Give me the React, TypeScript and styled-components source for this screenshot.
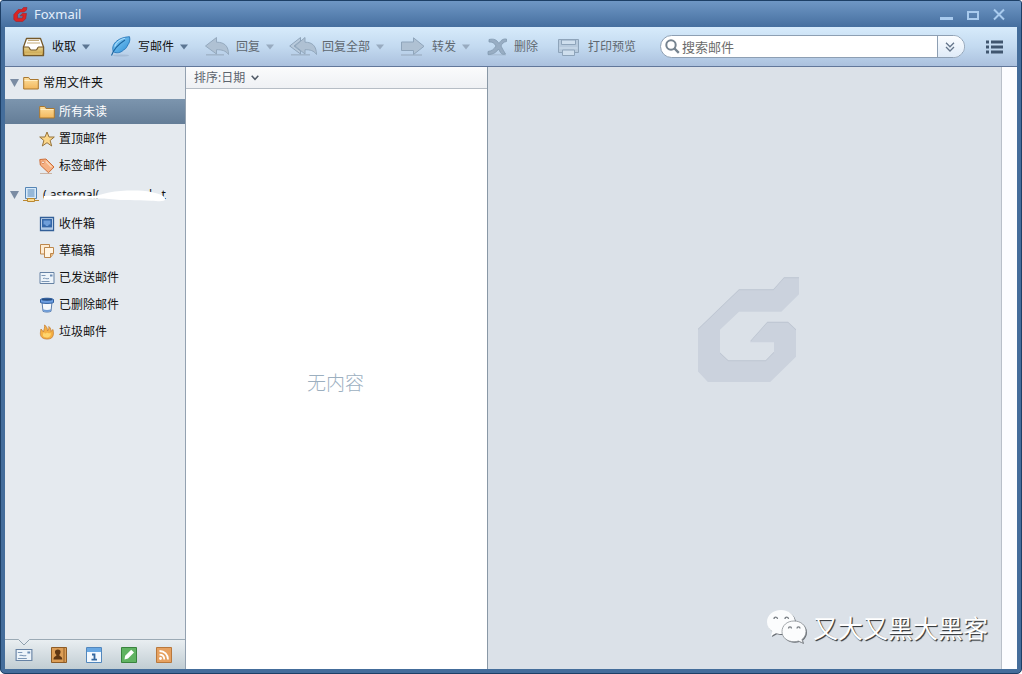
import React from "react";
import styled, { createGlobalStyle } from "styled-components";

const GlobalStyle = createGlobalStyle`
  *, *::before, *::after { box-sizing: border-box; }
  body {
    margin: 0;
    background: #fff;
    font-family: "Noto Sans", "Noto Sans CJK SC", sans-serif;
    font-size: 12px;
    line-height: 18px;
    color: #111;
  }
  button, input { font: inherit; color: inherit; }
  button { border: 0; padding: 0; background: none; cursor: pointer; }
  ul { list-style: none; margin: 0; padding: 0; }
  svg { display: block; flex: none; }
`;

const AppWindow = styled.div`
  display: flex;
  flex-direction: column;
  min-height: 100vh;
  padding: 0 4px 4px;
  border: 1px solid #1d3f66;
  border-radius: 3px 3px 5px 5px;
  background: #446d9b;
  overflow: hidden;
`;

const TitleBar = styled.header`
  display: flex;
  align-items: center;
  gap: 5px;
  height: 26px;
  margin: 0 -4px;
  padding: 0 15px 0 12px;
  background: linear-gradient(#6f97c5, #466f9f);
`;

const Title = styled.h1`
  flex: 1;
  margin: 0;
  font-family: "Noto Sans", sans-serif;
  font-size: 13px;
  font-weight: 400;
  color: #e3eefb;
`;

const WindowControls = styled.div`
  display: flex;
  gap: 12px;
`;

const ControlButton = styled.button`
  display: flex;
  color: #a9cbee;
`;

const Toolbar = styled.div`
  display: flex;
  align-items: center;
  gap: 16px;
  height: 40px;
  padding: 0 14px 0 15px;
  border-bottom: 1px solid #61779a;
  background: linear-gradient(#d7ebfb, #c3daf0 50%, #abc1de);
`;

const ToolButton = styled.button<{ $muted?: boolean }>`
  display: flex;
  align-items: center;
  gap: 6px;
  white-space: nowrap;
  color: ${(p) => (p.$muted ? "#5f6870" : "#111")};
`;

const IconSlot = styled.span<{ $width: number }>`
  display: flex;
  justify-content: center;
  width: ${(p) => p.$width}px;
`;

const SearchBox = styled.form`
  display: flex;
  flex: 1;
  align-items: center;
  height: 23px;
  margin: 0 5px 0 8px;
  padding-left: 4px;
  border: 1px solid #8d9fb3;
  border-radius: 12px;
  background: #fff;
  overflow: hidden;
`;

const SearchInput = styled.input`
  flex: 1;
  min-width: 0;
  height: 21px;
  padding: 0 2px;
  border: 0;
  outline: 0;
  background: transparent;
  font-size: 13px;
  &::placeholder { color: #6c6c6c; opacity: 1; }
`;

const SearchMore = styled.button`
  display: flex;
  align-items: center;
  justify-content: center;
  width: 27px;
  height: 21px;
  padding-right: 3px;
  border-left: 1px solid #8d9fb3;
  background: linear-gradient(#fbfdff, #dfebf8);
`;

const Body = styled.div`
  display: flex;
  flex: 1;
`;

const Sidebar = styled.nav`
  display: flex;
  flex-direction: column;
  flex: none;
  width: 181px;
  border-right: 1px solid #93a1b0;
  background: #e5eaef;
`;

const Tree = styled.div`
  display: flex;
  flex: 1;
  flex-direction: column;
  gap: 1px;
`;

const GroupHead = styled.button`
  display: flex;
  align-items: center;
  gap: 4px;
  width: 100%;
  height: 32px;
  padding: 0 5px;
`;

const FolderList = styled.ul`
  display: flex;
  flex-direction: column;
  gap: 2px;
`;

const FolderLink = styled.a<{ $active?: boolean }>`
  display: flex;
  align-items: center;
  gap: 4px;
  height: 25px;
  padding-left: 34px;
  color: ${(p) => (p.$active ? "#fff" : "#111")};
  background: ${(p) => (p.$active ? "linear-gradient(#7c95ae, #647d97)" : "none")};
  text-decoration: none;
`;

const Account = styled.span`
  position: relative;
  white-space: pre;
`;

const Cover = styled.svg`
  position: absolute;
  left: 0;
  top: 4px;
`;

const ModuleBar = styled.div`
  position: relative;
  display: flex;
  align-items: center;
  gap: 17px;
  height: 30px;
  padding-left: 10px;
  border-top: 1px solid #9baab5;
  background: linear-gradient(#e9eef1, #c1cdd3);
`;

const Notch = styled.svg`
  position: absolute;
  left: 13px;
  top: -1px;
`;

const ModuleButton = styled.button`
  display: flex;
`;

const MessageList = styled.section`
  display: flex;
  flex-direction: column;
  flex: none;
  width: 302px;
  border-right: 1px solid #8998a6;
  background: #fff;
`;

const SortBar = styled.button`
  display: flex;
  align-items: center;
  gap: 6px;
  height: 22px;
  padding: 0 8px;
  border-bottom: 1px solid #b6bdc5;
  background: linear-gradient(#fafbfc, #eff1f4);
  color: #5c646d;
`;

const Empty = styled.p`
  display: flex;
  flex: 1;
  align-items: center;
  justify-content: center;
  margin: 0;
  padding: 8px 2px 0 0;
  font-size: 19px;
  font-weight: 300;
  color: #9cafbf;
`;

const Reader = styled.main`
  position: relative;
  display: flex;
  flex: 1;
  align-items: center;
  justify-content: center;
  padding: 0 0 77px 8px;
  border-right: 1px solid #b9c0c9;
  background: #dbe1e8;
`;

const Gutter = styled.div`
  flex: none;
  width: 15px;
  background: #fcfdff;
`;

const Watermark = styled.div`
  position: absolute;
  right: 13px;
  bottom: 22px;
  display: flex;
  align-items: center;
  gap: 5px;
  font-size: 25px;
  line-height: 38px;
  font-weight: 400;
  color: #fff;
  white-space: nowrap;
  text-shadow: 1px 1px 1px #34383c, 1px 1px 0 #74797e;
`;

const Caret = ({ color = "#65809d" }: { color?: string }) => (
  <svg width="8" height="6" viewBox="0 0 8 6"><path d="M0 .5h8L4 5.5z" fill={color} /></svg>
);

const Twisty = () => (
  <svg width="9" height="8" viewBox="0 0 9 8"><path d="M0 0h9L4.500 8z" fill="#7a8ca3" /></svg>
);

const TrayIcon = () => (
  <svg width="26" height="22" viewBox="0 0 26 22">
    <defs><linearGradient id="tray" x2="0" y2="1"><stop stopColor="#e9d491" /><stop offset="1" stopColor="#c39a3e" /></linearGradient></defs>
    <path d="M6.500 2.500h14l3 8.500v8.500h-20V11z" fill="#fff" stroke="#75592a" strokeWidth="1.300" strokeLinejoin="round" />
    <path d="M8 4.500h11M7 7h13" stroke="#c3ab7a" />
    <path d="M3.500 11h5c1 0 1 3 2.500 3h5c1.500 0 1.500-3 2.500-3h5v7c0 1-.5 1.500-1.500 1.500H5c-1 0-1.500-.5-1.500-1.500z" fill="url(#tray)" stroke="#75592a" strokeWidth="1.200" />
    <path d="M5 18h17" stroke="#eddb9f" opacity=".7" />
  </svg>
);

const QuillIcon = () => (
  <svg width="26" height="22" viewBox="0 0 26 22">
    <defs><linearGradient id="quill" x2="1" y2="1"><stop stopColor="#8fd4fa" /><stop offset="1" stopColor="#2a8bd4" /></linearGradient></defs>
    <ellipse cx="15" cy="19.500" rx="8" ry="1" fill="#93a9c4" opacity=".5" />
    <path d="M7.500 16C4.500 9 11 1.500 23.500.7c.8 3.300 0 6-1.500 8l-1 1.800c-1 2-2 2.800-3.500 3.500C14.500 17 11 17.300 7.500 16z" fill="url(#quill)" stroke="#2576b9" strokeWidth=".9" />
    <path d="M5.500 19.500C7.500 14 12 8.500 19 4" fill="none" stroke="#1a649f" strokeWidth="1.100" />
    <path d="M9 10.500c1-4 5-7 10-8.300" fill="none" stroke="#c5eaff" opacity=".8" />
  </svg>
);

const ReplyIcon = () => (
  <svg width="26" height="22" viewBox="0 0 26 22">
    <path d="M2 18.800h18" stroke="#9cafc3" strokeWidth="1.500" opacity=".8" />
    <path d="M1.500 10L12.500 1.500v4.700C20.500 6.200 24.500 10 24.500 18.500 21.500 14.500 18 13.700 12.500 13.700V18z" fill="#afc1d3" stroke="#94a9be" />
  </svg>
);

const ReplyAllIcon = () => (
  <svg width="28" height="22" viewBox="-1 0 28 22">
    <path d="M1 18.800h19" stroke="#9cafc3" strokeWidth="1.500" opacity=".8" />
    <path d="M-.3 10L10.500 1.500V5L4 10l6.500 5v3z" fill="#b8cadc" stroke="#8fa5bb" />
    <path d="M5 10L15 1.500v4.700C22.500 6.200 26.300 10 26.500 18.500 23.500 14.500 20.500 13.700 15 13.700V18z" fill="#afc1d3" stroke="#91a7bc" />
  </svg>
);

const ForwardIcon = () => (
  <svg width="26" height="22" viewBox="0 0 26 22">
    <path d="M1 19h21" stroke="#9cafc3" strokeWidth="1.500" opacity=".8" />
    <path d="M1.500 6h12V1.800l10.500 8.500L13.500 18.500v-4h-12z" fill="#afc1d3" stroke="#8fa5bb" />
  </svg>
);

const DeleteIcon = () => (
  <svg width="22" height="22" viewBox="0 0 22 22">
    <path d="M2 18.800h18" stroke="#a3b6ca" strokeWidth="1.200" opacity=".7" />
    <path d="M3 3.500c5-1 7.500 0 10 4 1.500-3 4-5 7.500-4.500v2.500c-3 .5-4.500 2-5.500 4.500 1.500 3 3 5.500 4.500 8-2.500.8-4 0-5-1.500L12.500 13c-2 3-5 5.500-10.500 5.500v-3c3.500-.5 6-2 8-5.500C8.500 7 6 5.700 3 6z" fill="#98adc3" stroke="#8299b0" strokeWidth=".8" />
  </svg>
);

const PrintIcon = () => (
  <svg width="28" height="22" viewBox="0 0 28 22">
    <path d="M4.500 3.500h20v13h-20z" fill="#b7cadd" stroke="#8ea4ba" />
    <path d="M7.500 4h14v4.500h-14z" fill="#cfdfee" stroke="#8ea4ba" />
    <path d="M5.500 12h18" stroke="#cfdfee" />
    <path d="M8.500 14h12v5.500h-12z" fill="#cfdfee" stroke="#8ea4ba" />
  </svg>
);

const FolderIcon = () => (
  <svg width="16" height="16" viewBox="0 0 16 16">
    <defs><linearGradient id="folder" x2="0" y2="1"><stop stopColor="#fde0a0" /><stop offset="1" stopColor="#f2b75c" /></linearGradient></defs>
    <path d="M.7 14V2.500h5L7 4.500h8.300V14z" fill="url(#folder)" stroke="#a9772f" />
    <path d="M1.500 5.500h13" stroke="#ffeec4" />
  </svg>
);

const StarIcon = () => (
  <svg width="16" height="16" viewBox="0 0 16 16">
    <path d="M8 1l2 5h5.300l-4.200 3.500L12.700 15 8 11.700 3.300 15l1.600-5.500L.7 6H6z" fill="#fbd78b" stroke="#96743c" />
  </svg>
);

const TagIcon = () => (
  <svg width="16" height="16" viewBox="0 0 16 16">
    <path d="M1 15.500h12" stroke="#c9b4a5" />
    <path d="M.8 1.500L7 1l8 8-5.500 5.700L1.300 7z" fill="#f6b184" stroke="#cd6e38" strokeLinejoin="round" />
    <path d="M7 3.500l5.500 5.500" stroke="#fbd8b9" strokeWidth="1.500" />
    <circle cx="4" cy="4.300" r="1.300" fill="#fff" stroke="#cd6e38" strokeWidth=".7" />
  </svg>
);

const ServerIcon = () => (
  <svg width="16" height="16" viewBox="0 0 16 16">
    <path d="M2.500.5h11v11h-11z" fill="#d7eafa" stroke="#5585b5" />
    <path d="M4.500 3h7M4.500 5h7M4.500 7h7M4.500 9h7" stroke="#5585b5" />
    <path d="M0 13.500h16" stroke="#bb8831" />
    <path d="M4.500 11.500h7v3h-7z" fill="#fbdc92" stroke="#bb8831" />
  </svg>
);

const InboxIcon = () => (
  <svg width="16" height="16" viewBox="0 0 16 16">
    <path d="M1.500 1.500h13v13h-13z" fill="#cfe1f5" stroke="#325f98" strokeWidth="1.300" />
    <path d="M3 3h10v8.500H3z" fill="#3467a8" />
    <path d="M4.500 4.500h7v4h-1.500l-1 1.500H7L6 8.500H4.500z" fill="#6f9fda" />
    <path d="M3 13h10" stroke="#8db0d8" />
  </svg>
);

const DraftIcon = () => (
  <svg width="16" height="16" viewBox="0 0 16 16">
    <path d="M1.500 1.500h9v9.500h-9z" fill="#fdebd2" stroke="#bd874c" />
    <path d="M5.500 4.500h9v6l-3 4h-6z" fill="#fff5e4" stroke="#bd874c" />
    <path d="M14.500 10.500h-3v4" fill="#edbd82" stroke="#bd874c" />
  </svg>
);

const SentIcon = ({ width = 16 }: { width?: number }) => (
  <svg width={width} height="16" viewBox="0 0 16 16" preserveAspectRatio="none">
    <path d="M1 2.500h14v11H1z" fill="#edf4fa" stroke="#6682a4" />
    <path d="M2.500 5.500h4M2.500 11.500h8M4 8.500c2-1 3 1 6 0" fill="none" stroke="#7c97b6" />
    <path d="M11 4.500h2.500v2H11z" fill="#6c8db4" />
  </svg>
);

const TrashIcon = () => (
  <svg width="16" height="16" viewBox="0 0 16 16">
    <path d="M3 5h10l-1 9.300c-2 1-6 1-8 0z" fill="#f4f8fc" stroke="#5d7fad" />
    <path d="M4 12.300c2 .8 6 .8 8 0l-.2 2c-2 .8-5.500.8-7.500 0z" fill="#6d9bd6" />
    <path d="M1.500 2.500c2-1.700 11-1.700 13 0v3c-2 1.200-11 1.200-13 0z" fill="#6d9fe2" stroke="#2e5e9f" />
    <ellipse cx="8" cy="2.600" rx="5.500" ry="1.200" fill="#254d83" />
  </svg>
);

const FireIcon = () => (
  <svg width="16" height="16" viewBox="0 0 16 16">
    <path d="M3 13.500C.5 11 1.500 8 2 5l2.500 3C5 5 6 3.500 5.500 1 8 2.500 8.500 5 8.500 7 10 5.500 10 4 9.800 2.500c2 1.500 2.200 3.500 2 5L14 5.500c.5 3.500 1 6-1.500 8.500-2.500 1.500-7 1.500-9.500-.5z" fill="#f5b043" stroke="#c88034" strokeWidth=".8" />
    <path d="M4 12c-.5-2 .5-3 1-4 .5 2 2 2 3 .5 1 1 2.500 1 3.500.2 1 2-.5 4-2 4.500-2 .5-4 .3-5.500-1.200z" fill="#ffd56d" />
  </svg>
);

const ContactIcon = () => (
  <svg width="18" height="18" viewBox="0 0 18 18">
    <path d="M1.500 1.500h15v15h-15z" fill="#dc9e57" stroke="#8e5c27" />
    <path d="M14 2v14" stroke="#8e5c27" />
    <path d="M7.800 3.500c4 0 3 4 1.500 5.500 0 1.500 3 1 3 4.500H3.500c0-3.500 3-3 3-4.500C4.500 7.500 4 3.500 7.800 3.500z" fill="#5f3714" />
  </svg>
);

const CalendarIcon = () => (
  <svg width="18" height="18" viewBox="0 0 18 18">
    <path d="M1.500 1.500h15v15h-15z" fill="#f3f9ff" stroke="#5287bd" />
    <path d="M2 2h14v4H2z" fill="#69a8e3" />
    <path d="M7 8.500h2.500v5M6.500 13.700h5.500" fill="none" stroke="#33679f" strokeWidth="1.800" />
  </svg>
);

const NoteIcon = () => (
  <svg width="18" height="18" viewBox="0 0 18 18">
    <path d="M1.500 1.500h15v15h-15z" fill="#60b362" stroke="#39833e" />
    <path d="M4.500 13.500l.7-3.700 6-6L14 6.500l-6 6z" fill="#fff" />
  </svg>
);

const RssIcon = () => (
  <svg width="18" height="18" viewBox="0 0 18 18">
    <path d="M1.500 1.500h15v15h-15z" fill="#e6a160" stroke="#b9783c" />
    <path d="M4.500 5c5 0 8.500 3.500 8.500 8.500M4.500 8.700c3 0 4.800 1.800 4.800 4.800" fill="none" stroke="#fff" strokeWidth="1.800" />
    <circle cx="5.500" cy="12.500" r="1.400" fill="#fff" />
  </svg>
);

const G_POINTS =
  "312,36 357,36 357,84 304,137 177,137 120,191 120,262 145,285 257,285 282,260 282,228 210,228 262,170 324,170 348,192 348,272 268,350 86,350 54,316 54,191 177,72 280,72";

const AppIcon = () => (
  <svg width="16" height="17" viewBox="0 0 16 17">
    <path d="M10.500 1.500H14l-.7 2.800L11 6H7L4.500 8.500v3.700h4.800l.8-2.400H7l2.300-2.300h4.200l-.8 5.200-3 2.800H3L.8 13.500v-5l4.400-5h3.500z" fill="#dc2423" stroke="#a62029" strokeWidth=".6" />
  </svg>
);

const BigLogo = () => (
  <svg width="101" height="105" viewBox="54 36 303 314">
    <polygon points={G_POINTS} fill="#bcc4d0" />
    <polygon points={G_POINTS} transform="translate(0 3)" fill="#cbd2dd" />
  </svg>
);

const ChatIcon = () => (
  <svg width="42" height="38" viewBox="0 0 42 38">
    <g fill="#696e74" transform="translate(1 1)">
      <path d="M15 1c8 0 14 5 14 12s-6 12-14 12c-2 0-3.500-.3-5-.8L5 27l1.200-4.700C3 20 1 17 1 13 1 6 7 1 15 1z" />
      <path d="M28 12c7 0 12 4.500 12 10.500 0 3.500-1.700 6-4 8L37 34l-4.500-2c-1.500.5-3 .7-4.500.7-7 0-12-4.300-12-10.200S21 12 28 12z" />
    </g>
    <path d="M15 1c8 0 14 5 14 12s-6 12-14 12c-2 0-3.500-.3-5-.8L5 27l1.200-4.700C3 20 1 17 1 13 1 6 7 1 15 1z" fill="#fbfcfd" />
    <path d="M28 12c7 0 12 4.500 12 10.500 0 3.500-1.700 6-4 8L37 34l-4.500-2c-1.500.5-3 .7-4.500.7-7 0-12-4.300-12-10.200S21 12 28 12z" fill="#fbfcfd" stroke="#8b9096" strokeWidth=".8" />
    <path d="M8 10c0-2.500 3.500-2.500 3.500 0M19 10c0-2.500 3.500-2.500 3.500 0M22.500 19.500c0-2.200 3-2.200 3 0M31 19.500c0-2.200 3-2.200 3 0" fill="none" stroke="#777c82" strokeWidth="1.300" />
  </svg>
);

const tools = [
  { label: "收取", icon: <TrayIcon />, slot: 26, menu: true, muted: false },
  { label: "写邮件", icon: <QuillIcon />, slot: 26, menu: true, muted: false },
  { label: "回复", icon: <ReplyIcon />, slot: 26, menu: true, muted: true },
  { label: "回复全部", icon: <ReplyAllIcon />, slot: 26, menu: true, muted: true },
  { label: "转发", icon: <ForwardIcon />, slot: 26, menu: true, muted: true },
  { label: "删除", icon: <DeleteIcon />, slot: 22, menu: false, muted: true },
  { label: "打印预览", icon: <PrintIcon />, slot: 28, menu: false, muted: true },
];

const common = [
  { label: "所有未读", icon: <FolderIcon />, active: true },
  { label: "置顶邮件", icon: <StarIcon />, active: false },
  { label: "标签邮件", icon: <TagIcon />, active: false },
];

const mailbox = [
  { label: "收件箱", icon: <InboxIcon /> },
  { label: "草稿箱", icon: <DraftIcon /> },
  { label: "已发送邮件", icon: <SentIcon /> },
  { label: "已删除邮件", icon: <TrashIcon /> },
  { label: "垃圾邮件", icon: <FireIcon /> },
];

const modules = [
  { label: "邮件", icon: <SentIcon width={18} /> },
  { label: "联系人", icon: <ContactIcon /> },
  { label: "日历", icon: <CalendarIcon /> },
  { label: "便签", icon: <NoteIcon /> },
  { label: "订阅", icon: <RssIcon /> },
];

export default function App() {
  return (
    <>
      <GlobalStyle />
      <AppWindow>
        <TitleBar>
          <AppIcon />
          <Title>Foxmail</Title>
          <WindowControls>
            <ControlButton aria-label="最小化">
              <svg width="15" height="14" viewBox="0 0 15 14"><path d="M1 11.500h13" stroke="currentColor" strokeWidth="3" /></svg>
            </ControlButton>
            <ControlButton aria-label="最大化">
              <svg width="14" height="14" viewBox="0 0 14 14"><path d="M2 5h10v7H2z" fill="none" stroke="currentColor" strokeWidth="2" /></svg>
            </ControlButton>
            <ControlButton aria-label="关闭">
              <svg width="14" height="14" viewBox="0 0 14 14"><path d="M2 2.500l10 10M12 2.500l-10 10" stroke="currentColor" strokeWidth="2" /></svg>
            </ControlButton>
          </WindowControls>
        </TitleBar>

        <Toolbar>
          {tools.map((t) => (
            <ToolButton key={t.label} $muted={t.muted}>
              <IconSlot $width={t.slot}>{t.icon}</IconSlot>
              {t.label}
              {t.menu && <Caret color={t.muted ? "#98abc0" : "#5c7693"} />}
            </ToolButton>
          ))}
          <SearchBox role="search" onSubmit={(e) => e.preventDefault()}>
            <svg width="15" height="15" viewBox="0 0 15 15">
              <circle cx="6" cy="6" r="4.700" fill="none" stroke="#75838f" strokeWidth="2" />
              <path d="M9.500 9.500l4.300 4.300" stroke="#75838f" strokeWidth="2.400" />
            </svg>
            <SearchInput type="text" aria-label="搜索邮件" placeholder="搜索邮件" />
            <SearchMore type="button" aria-label="高级搜索">
              <svg width="10" height="10" viewBox="0 0 10 10"><path d="M1 .8l4 4 4-4M1 5l4 4 4-4" fill="none" stroke="#64758a" strokeWidth="1.300" /></svg>
            </SearchMore>
          </SearchBox>
          <ToolButton aria-label="菜单">
            <svg width="17" height="14" viewBox="0 0 17 14"><path d="M0 2h3M5 2h12M0 7h3M5 7h12M0 12h3M5 12h12" stroke="#40566f" strokeWidth="3" /></svg>
          </ToolButton>
        </Toolbar>

        <Body>
          <Sidebar>
            <Tree>
              <section>
                <GroupHead>
                  <Twisty />
                  <FolderIcon />
                  常用文件夹
                </GroupHead>
                <FolderList>
                  {common.map((f) => (
                    <li key={f.label}>
                      <FolderLink href="#" $active={f.active}>{f.icon}{f.label}</FolderLink>
                    </li>
                  ))}
                </FolderList>
              </section>
              <section>
                <GroupHead>
                  <Twisty />
                  <ServerIcon />
                  <Account>
                    {"( asternal(                l   t"}
                    <Cover width="124" height="13" viewBox="0 0 124 13">
                      <path d="M0 8.500h56V13H0z" fill="#e5eaef" />
                      <path d="M1 6C15 5 40 5.500 50 6 56 5.500 60 3.500 66 2.500c14-2.500 32-2.500 42-.5 9 1.500 15 4.500 14 7.500 0 2-5 2-14 1.200-16-.8-26 .3-42-1.700-8-1-11-.5-18-.3C35 9.500 20 9 1 9.700z" fill="#fff" />
                    </Cover>
                  </Account>
                </GroupHead>
                <FolderList>
                  {mailbox.map((f) => (
                    <li key={f.label}>
                      <FolderLink href="#">{f.icon}{f.label}</FolderLink>
                    </li>
                  ))}
                </FolderList>
              </section>
            </Tree>
            <ModuleBar>
              <Notch width="12" height="7" viewBox="0 0 12 7"><path d="M0 0h12L6 6z" fill="#e5eaef" /><path d="M.5.500L6 6 11.500.500" fill="none" stroke="#8fa0ad" /></Notch>
              {modules.map((m) => (
                <ModuleButton key={m.label} aria-label={m.label}>{m.icon}</ModuleButton>
              ))}
            </ModuleBar>
          </Sidebar>

          <MessageList>
            <SortBar>
              排序:日期
              <svg width="8" height="6" viewBox="0 0 8 6"><path d="M.7.700L4 4.300 7.300.700" fill="none" stroke="#505a66" strokeWidth="1.500" /></svg>
            </SortBar>
            <Empty>无内容</Empty>
          </MessageList>

          <Reader>
            <BigLogo />
            <Watermark>
              <ChatIcon />
              又大又黑大黑客
            </Watermark>
          </Reader>
          <Gutter />
        </Body>
      </AppWindow>
    </>
  );
}
